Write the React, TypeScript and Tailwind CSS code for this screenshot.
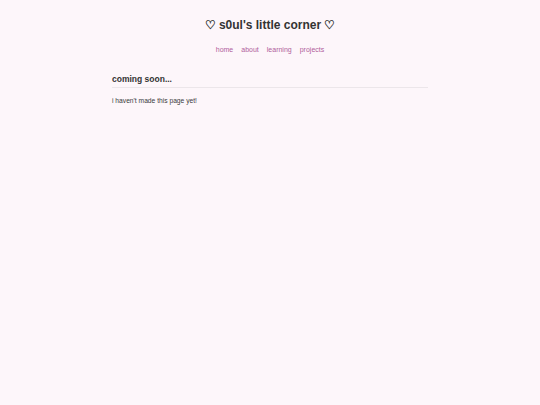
export default function App() {
  return (
    <div className="min-h-[405px] w-full bg-[#fdf6fa] text-[#333333]" style={{ fontFamily: '"Liberation Sans", Arial, sans-serif' }}>
      <header className="flex flex-col items-center pt-[18px]">
        <h1 className="text-[12px] font-bold leading-[14px]">♡ s0ul's little corner ♡</h1>
        <nav className="mt-[13px] flex gap-[8px] text-[7px] leading-[9px] text-[#b0609a]">
          <a href="#">home</a>
          <a href="#">about</a>
          <a href="#">learning</a>
          <a href="#">projects</a>
        </nav>
      </header>
      <main className="mx-auto mt-[20px] w-[316px]">
        <h2 className="border-b border-[#ece6ea] pb-[2px] text-[8.5px] font-bold leading-[11px]">coming soon...</h2>
        <p className="mt-[8px] text-[6.7px] leading-[9px] text-[#3a3a3a]">i haven't made this page yet!</p>
      </main>
    </div>
  );
}
